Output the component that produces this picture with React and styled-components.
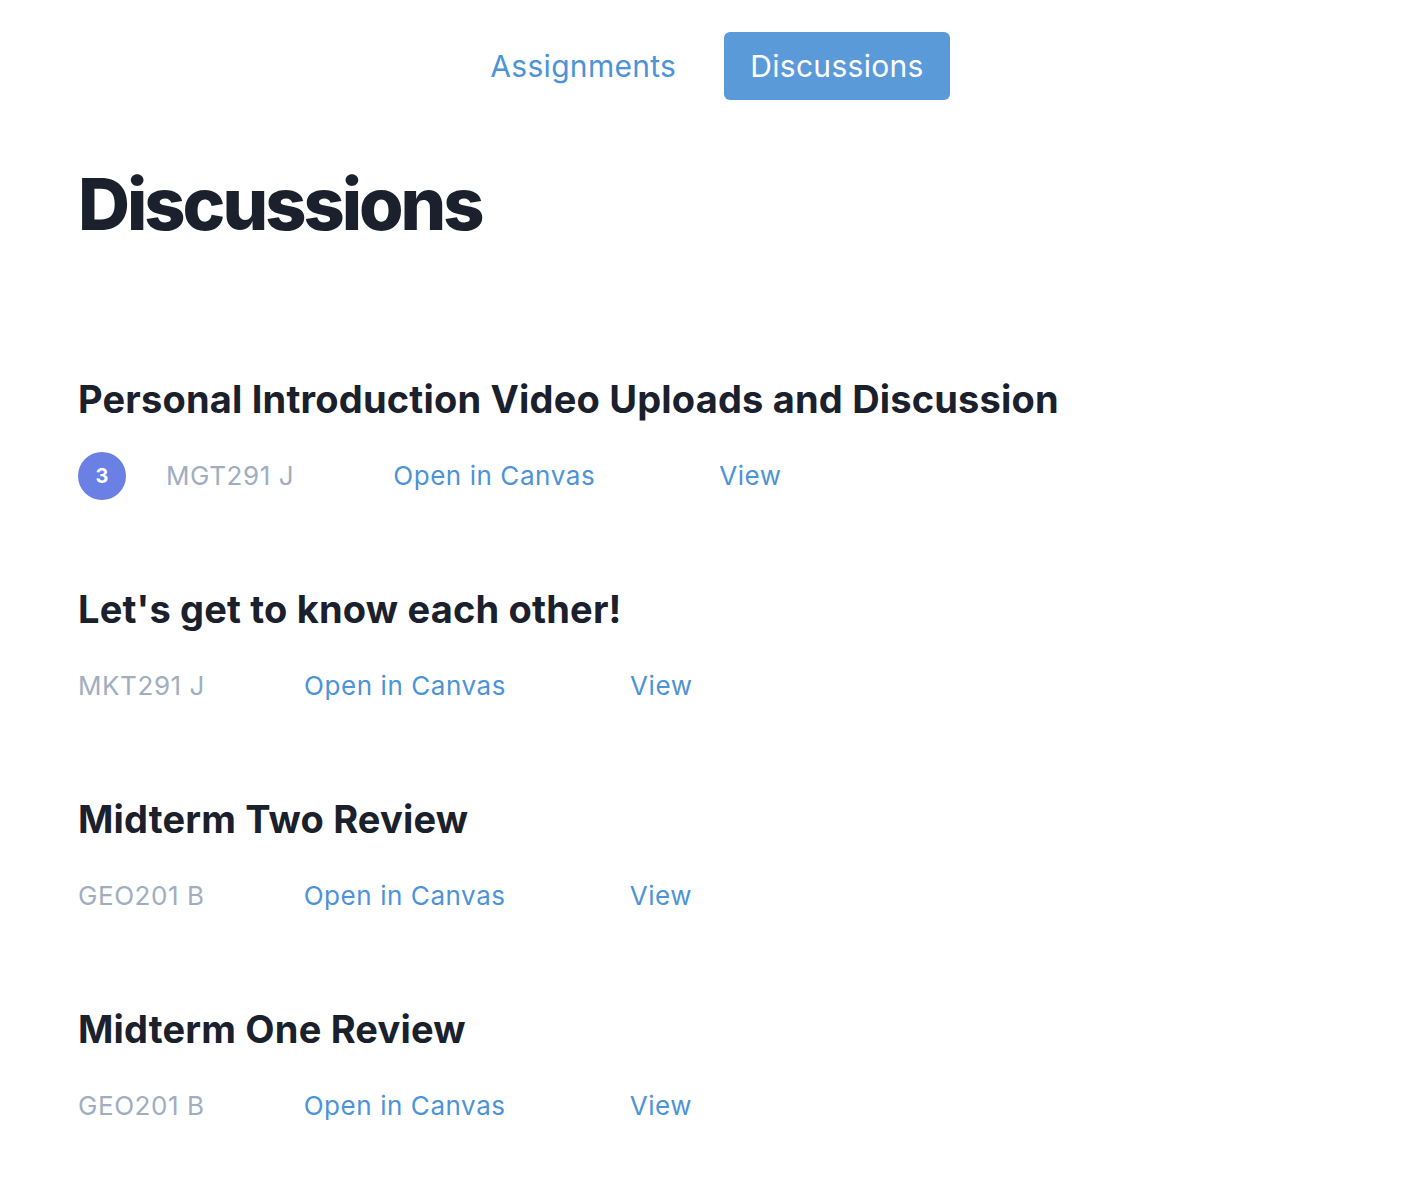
import styled, { createGlobalStyle } from 'styled-components'

const GlobalStyle = createGlobalStyle`
  body {
    margin: 0;
    background: #fff;
    font-family: Inter, "Noto Sans", sans-serif;
    color: #1a202c;
  }
`

const Page = styled.div`
  padding: 32px 78px 60px;
`

const Tabs = styled.nav`
  display: flex;
  justify-content: center;
  gap: 22px;
  padding-right: 4px;
`

const Tab = styled.button`
  border: none;
  border-radius: 6px;
  background: ${p => (p.$active ? '#5a9ad9' : 'transparent')};
  color: ${p => (p.$active ? '#fff' : '#4c93d8')};
  font-family: inherit;
  font-size: 30px;
  line-height: 36px;
  letter-spacing: 0.01em;
  padding: 16px 26px;
  cursor: pointer;
`

const Heading = styled.h1`
  margin: 68px 0 0;
  font-size: 72px;
  line-height: 1;
  font-weight: 800;
  letter-spacing: -0.042em;
`

const List = styled.div`
  display: flex;
  flex-direction: column;
  gap: 89px;
  margin-top: 139px;
`

const Item = styled.div`
  display: flex;
  flex-direction: column;
  gap: 33px;
`

const Title = styled.h2`
  margin: 0;
  font-size: 38px;
  line-height: 40px;
  font-weight: 700;
  letter-spacing: 0.005em;
`

const Meta = styled.div`
  display: flex;
  align-items: center;
  min-height: 48px;
  font-size: 26px;
  line-height: 32px;
  letter-spacing: 0.022em;
`

const Badge = styled.span`
  display: flex;
  align-items: center;
  justify-content: center;
  width: 48px;
  height: 48px;
  border-radius: 50%;
  background: #6a80e4;
  color: #fff;
  font-size: 20px;
  font-weight: 700;
  letter-spacing: 0;
  margin-right: 40px;
`

const Course = styled.span`
  color: #a0aec0;
  margin-right: 99px;
`

const Link = styled.a`
  color: #4c93d8;
  text-decoration: none;
  margin-right: ${p => p.$gap || 0}px;
  cursor: pointer;
`

const discussions = [
  { title: 'Personal Introduction Video Uploads and Discussion', course: 'MGT291 J', unread: 3 },
  { title: "Let's get to know each other!", course: 'MKT291 J' },
  { title: 'Midterm Two Review', course: 'GEO201 B' },
  { title: 'Midterm One Review', course: 'GEO201 B' },
]

const App = () => {
  return (
    <Page>
      <GlobalStyle />
      <Tabs>
        <Tab>Assignments</Tab>
        <Tab $active>Discussions</Tab>
      </Tabs>
      <Heading>Discussions</Heading>
      <List>
        {discussions.map(d => (
          <Item key={d.title}>
            <Title>{d.title}</Title>
            <Meta>
              {d.unread && <Badge>{d.unread}</Badge>}
              <Course>{d.course}</Course>
              <Link $gap={124}>Open in Canvas</Link>
              <Link>View</Link>
            </Meta>
          </Item>
        ))}
      </List>
    </Page>
  )
}

export default App
